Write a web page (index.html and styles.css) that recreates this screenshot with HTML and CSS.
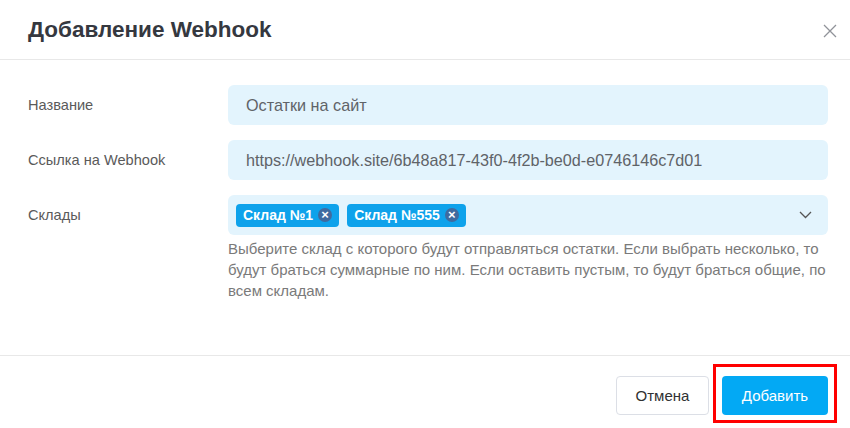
FILE: index.html
```html
<!DOCTYPE html>
<html lang="ru">
<head>
    <meta charset="UTF-8">
    <title>Добавление Webhook</title>
    <link rel="stylesheet" href="styles.css">
</head>
<body>

<div class="dialog">
    <div class="dialog-header">
        <h1 class="dialog-title">Добавление Webhook</h1>
        <button class="close-btn" title="Закрыть">
            <svg width="14" height="14" viewBox="0 0 14 14">
                <path d="M1 1L13 13M13 1L1 13" stroke="#909399" stroke-width="1.3" fill="none"/>
            </svg>
        </button>
    </div>

    <div class="dialog-body">
        <div class="form-row">
            <label class="form-label">Название</label>
            <div class="form-field">
                <div class="input">Остатки на сайт</div>
            </div>
        </div>

        <div class="form-row">
            <label class="form-label">Ссылка на Webhook</label>
            <div class="form-field">
                <div class="input">https://webhook.site/6b48a817-43f0-4f2b-be0d-e0746146c7d01</div>
            </div>
        </div>

        <div class="form-row">
            <label class="form-label">Склады</label>
            <div class="form-field">
                <div class="input select">
                    <span class="tag">Склад №1 <span class="tag-close">&times;</span></span>
                    <span class="tag">Склад №555 <span class="tag-close">&times;</span></span>
                    <svg class="chevron" width="13" height="8" viewBox="0 0 13 8">
                        <path d="M1 1L6.5 6.5L12 1" stroke="#555" stroke-width="1.3" fill="none"/>
                    </svg>
                </div>
                <div class="hint">Выберите склад с которого будут отправляться остатки. Если выбрать несколько, то будут браться суммарные по ним. Если оставить пустым, то будут браться общие, по всем складам.</div>
            </div>
        </div>
    </div>

    <div class="dialog-footer">
        <button class="btn btn-default">Отмена</button>
        <span class="highlight">
            <button class="btn btn-primary">Добавить</button>
        </span>
    </div>
</div>

</body>
</html>
```

FILE: styles.css
```css
body {
    font-family: "Liberation Sans", Arial, sans-serif;
    background-color: #fff;
    margin: 0;
    color: #606266;
}
.dialog {
    width: 850px;
    height: 428px;
    display: flex;
    flex-direction: column;
}
.dialog-header {
    height: 59px;
    border-bottom: 1px solid #e8e8e8;
    display: flex;
    align-items: center;
    justify-content: space-between;
    padding: 0 13px 0 28px;
}
.dialog-title {
    margin: 0;
    font-size: 22.5px;
    font-weight: bold;
    color: #35383f;
}
.close-btn {
    background: none;
    border: none;
    padding: 0;
    cursor: pointer;
    display: flex;
    margin-top: 2px;
}
.dialog-body {
    padding: 25px 22px 0 28px;
    display: flex;
    flex-direction: column;
    gap: 15px;
    height: 270px;
}
.form-row {
    display: flex;
}
.form-label {
    width: 200px;
    flex-shrink: 0;
    font-size: 14.6px;
    color: #5a5a5a;
    line-height: 40px;
}
.form-field {
    flex: 1;
}
.input {
    height: 40px;
    box-sizing: border-box;
    background-color: #e3f4fd;
    border-radius: 6px;
    padding: 0 18px;
    font-size: 16.2px;
    color: #5f6368;
    display: flex;
    align-items: center;
}
.select {
    padding: 0 16px 0 8px;
    gap: 8px;
}
.tag {
    background-color: #0ea2eb;
    color: #fff;
    font-size: 14px;
    font-weight: bold;
    height: 23px;
    border-radius: 4px;
    padding: 0 7px;
    display: flex;
    align-items: center;
    gap: 5px;
}
.tag-close {
    width: 14px;
    height: 14px;
    border-radius: 50%;
    background-color: #406a9f;
    color: #fff;
    font-size: 13px;
    line-height: 14px;
    text-align: center;
    font-weight: bold;
}
.chevron {
    margin-left: auto;
}
.hint {
    font-size: 15px;
    line-height: 21px;
    color: #7a7a7a;
    margin-top: 3px;
}
.dialog-footer {
    border-top: 1px solid #e8e8e8;
    display: flex;
    justify-content: flex-end;
    align-items: flex-start;
    gap: 4px;
    padding: 8px 13px 0 0;
}
.btn {
    font-family: "Liberation Sans", Arial, sans-serif;
    font-size: 15px;
    height: 39px;
    border-radius: 4px;
    cursor: pointer;
}
.btn-default {
    background-color: #fff;
    border: 1px solid #dcdfe6;
    color: #303133;
    width: 93px;
    margin-top: 12px;
}
.btn-primary {
    background-color: #03a9f4;
    border: none;
    color: #fff;
    width: 106px;
}
.highlight {
    display: flex;
    border: 3px solid #f00;
    padding: 9px 6px 5px 6px;
}
```
